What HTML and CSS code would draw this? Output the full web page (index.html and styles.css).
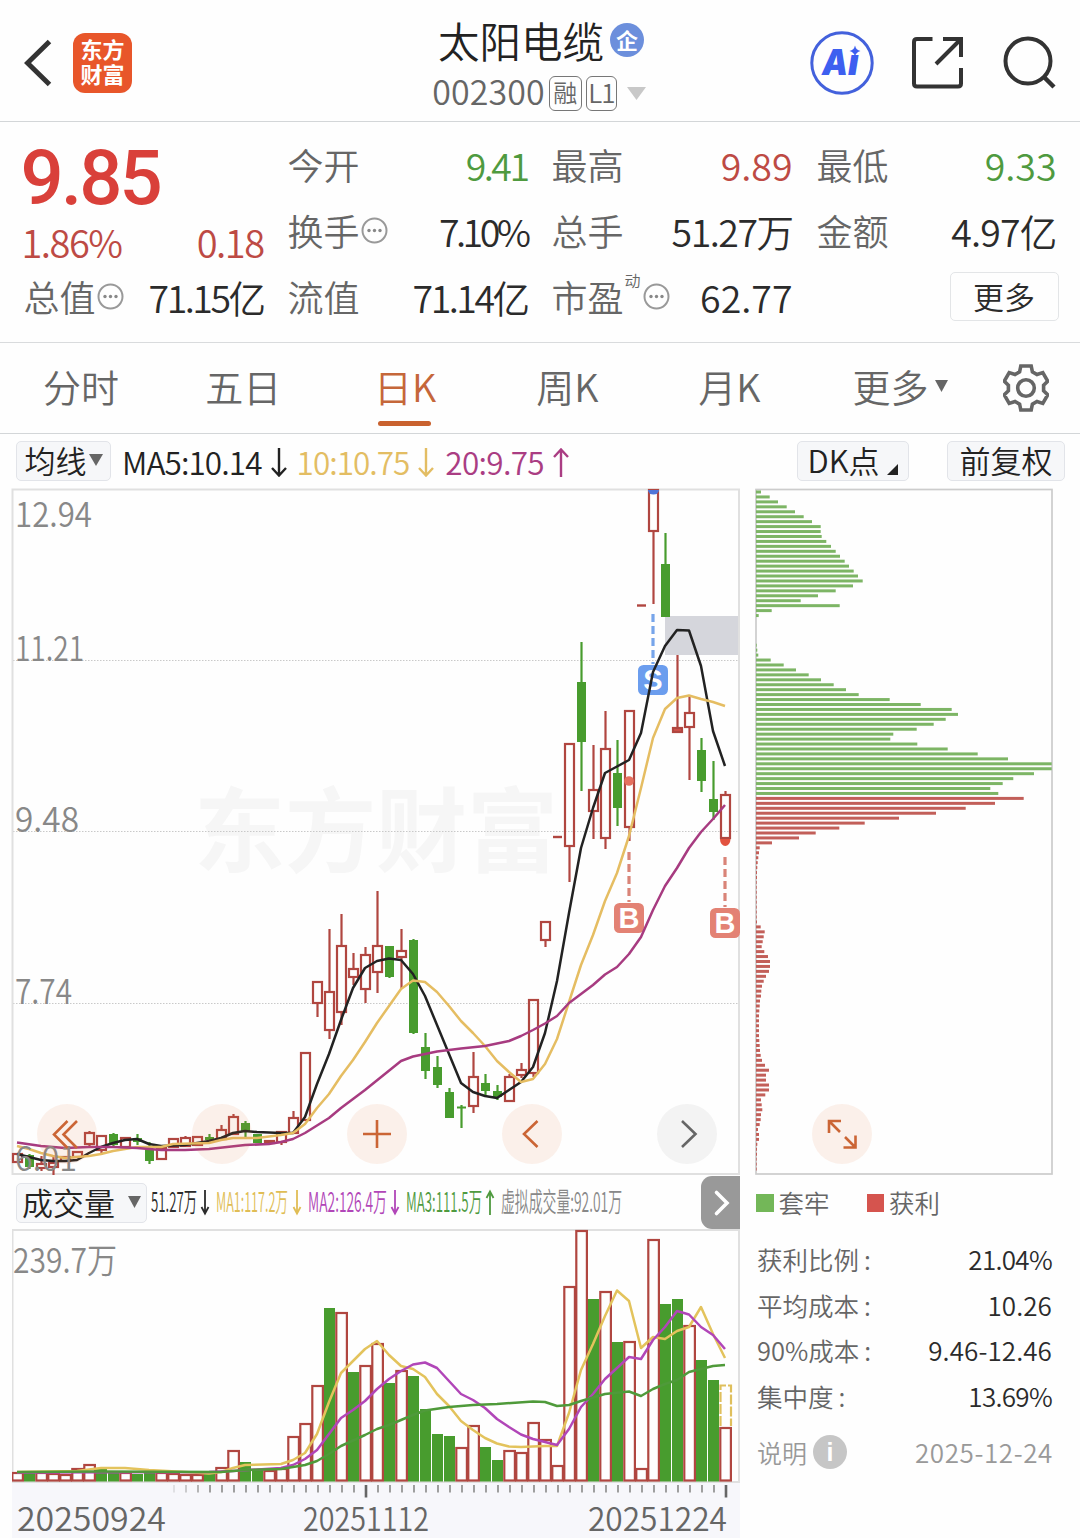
FILE: index.html
```html
<!DOCTYPE html>
<html lang="zh-CN">
<head>
<meta charset="utf-8">
<title>太阳电缆 002300</title>
<link rel="stylesheet" href="styles.css">
</head>
<body>
<header class="topbar">
  <div class="topbar-left">
    <svg class="back" width="28" height="50" viewBox="0 0 28 50"><path d="M25.500 3.500 3.500 25 25.500 46.500" fill="none" stroke="#333" stroke-width="5"/></svg>
    <div class="logo"><span>东方</span><span>财富</span></div>
  </div>
  <div class="title">
    <div class="title-name">太阳电缆<span class="badge-corp">企</span></div>
    <div class="title-code"><span class="code">002300</span><span class="tag">融</span><span class="tag tag-l1">L1</span><svg class="caret" width="19" height="13" viewBox="0 0 19 13"><path d="M0 0h19L9.500 13z" fill="#c8c8c8"/></svg></div>
  </div>
  <div class="topbar-right">
    <svg width="64" height="64" viewBox="0 0 64 64">
      <circle cx="32" cy="32" r="30.200" fill="none" stroke="#4361dc" stroke-width="3"/>
      <text x="12" y="44" class="ai-text" textLength="26" lengthAdjust="spacingAndGlyphs">A</text>
      <text x="38" y="44" class="ai-text">ı</text>
      <path d="M45 14.500q1 4.500 5.500 5.500-4.500 1-5.500 5.500-1-4.500-5.500-5.500 4.500-1 5.500-5.500z" fill="#3d5ff0"/>
    </svg>
    <svg width="52" height="52" viewBox="0 0 52 52"><path d="M20.500 2H5Q2 2 2 5V46.500Q2 49.500 5 49.500H46Q49 49.500 49 46.500V31M31 2H49V20M49 2 24 27" fill="none" stroke="#333" stroke-width="4"/></svg>
    <svg width="54" height="54" viewBox="0 0 54 54"><circle cx="25" cy="25" r="22.500" fill="none" stroke="#333" stroke-width="4"/><path d="M40 40 51 51" stroke="#333" stroke-width="4.500"/></svg>
  </div>
</header>

<section class="quote">
  <div class="price-cell">
    <div class="price">9.85</div>
    <div class="change"><span class="s15">1.86%</span><span class="s15">0.18</span></div>
  </div>
  <div class="cell"><label>今开</label><b class="down s25">9.41</b></div>
  <div class="cell"><label>最高</label><b class="up">9.89</b></div>
  <div class="cell"><label>最低</label><b class="down">9.33</b></div>
  <div class="cell"><label>换手<svg class="dots" width="27" height="27" viewBox="0 0 27 27"><use href="#more-dots"/></svg></label><b class="s35">7.10%</b></div>
  <div class="cell"><label>总手</label><b class="s15">51.27万</b></div>
  <div class="cell"><label>金额</label><b class="s1">4.97亿</b></div>
  <div class="cell"><label>总值<svg class="dots" width="27" height="27" viewBox="0 0 27 27"><use href="#more-dots"/></svg></label><b class="s25">71.15亿</b></div>
  <div class="cell"><label>流值</label><b class="s25">71.14亿</b></div>
  <div class="cell"><label>市盈<sup>动</sup><svg class="dots" width="27" height="27" viewBox="0 0 27 27"><use href="#more-dots"/></svg></label><b>62.77</b></div>
  <div class="cell cell-end"><button class="more">更多</button></div>
</section>

<nav class="tabs">
  <a>分时</a><a>五日</a><a class="active">日K</a><a>周K</a><a>月K</a>
  <a class="tab-more">更多<svg width="13" height="12" viewBox="0 0 13 12"><path d="M0 0h13L6.500 12z" fill="#666"/></svg></a>
  <svg class="gear" width="46" height="48" viewBox="-23 -24 46 48"><g fill="none" stroke="#666" stroke-width="3.600"><circle r="8.300"/><path d="M-5.200-22H5.200L6.400-16.200 11-13.500 16.800-15.400 21.700-6.800 17.600-2.700V2.700L21.700 6.800 16.800 15.400 11 13.500 6.400 16.200 5.200 22H-5.200L-6.400 16.200-11 13.500-16.800 15.400-21.700 6.800-17.600 2.700V-2.700L-21.700-6.800-16.800-15.400-11-13.500-6.400-16.200Z"/></g></svg>
</nav>

<div class="ma-bar">
  <button class="chip chip-ma">均线<svg width="14" height="12" viewBox="0 0 14 12"><path d="M0 0h14L7 12z" fill="#666"/></svg></button>
  <div class="ma ma5"><span>MA5:10.14</span><svg width="16" height="29" viewBox="0 0 16 29"><use href="#arrow-down"/></svg></div>
  <div class="ma ma10"><span>10:10.75</span><svg width="16" height="29" viewBox="0 0 16 29"><use href="#arrow-down"/></svg></div>
  <div class="ma ma20"><span>20:9.75</span><svg width="16" height="29" viewBox="0 0 16 29"><use href="#arrow-up"/></svg></div>
  <button class="chip chip-dk">DK点<svg width="11" height="11" viewBox="0 0 11 11"><path d="M11 0V11H0z" fill="#222"/></svg></button>
  <button class="chip chip-adj">前复权</button>
</div>

<main class="work">
  <section class="left">
    <div class="price-chart">
      <svg id="price" width="728" height="688" viewBox="12 488 728 688"></svg>
      <div class="controls">
        <button class="round"><svg width="60" height="60" viewBox="0 0 60 60"><path d="M30.500 17 17 30.500 30.500 44M40 17 26.500 30.500 40 44"/></svg></button>
        <button class="round"></button>
        <button class="round"><svg width="60" height="60" viewBox="0 0 60 60"><path d="M30 16V44M16 30H44"/></svg></button>
        <button class="round"><svg width="60" height="60" viewBox="0 0 60 60"><path d="M35.500 17 22 30 35.500 43"/></svg></button>
        <button class="round disabled"><svg width="60" height="60" viewBox="0 0 60 60"><path d="M25 17 38.500 30 25 43"/></svg></button>
      </div>
    </div>
    <div class="vol-bar">
      <button class="chip chip-vol">成交量<svg width="13" height="12" viewBox="0 0 13 12"><path d="M0 0h13L6.500 12z" fill="#666"/></svg></button>
      <svg class="vol-legend" width="475" height="53" viewBox="151 1176 475 53">
        <g id="vol-legend-items"></g>
      </svg>
      <button class="next"><svg width="39" height="53" viewBox="0 0 39 53"><path d="M15.500 16.500 26 27 15.500 37.500" fill="none" stroke="#fff" stroke-width="3.600" stroke-linecap="round"/></svg></button>
    </div>
    <svg id="volume" width="728" height="309" viewBox="12 1229 728 309"></svg>
  </section>
  <section class="right">
    <div class="chips-chart">
      <svg id="chips" width="298" height="688" viewBox="755 488 298 688"></svg>
      <button class="round expand"><svg width="60" height="60" viewBox="0 0 60 60"><path d="M28 28 17 17M17 29V17H29M33 33 43.500 43.500M43.500 31.500V43.500H31.500"/></svg></button>
    </div>
    <div class="legend"><span><i class="sq green"></i>套牢</span><span><i class="sq red"></i>获利</span></div>
    <dl class="stats">
      <div><dt>获利比例<i>:</i></dt><dd>21.04%</dd></div>
      <div><dt>平均成本<i>:</i></dt><dd class="wide">10.26</dd></div>
      <div><dt>90%成本<i>:</i></dt><dd class="wide">9.46-12.46</dd></div>
      <div><dt>集中度<i>:</i></dt><dd>13.69%</dd></div>
    </dl>
    <div class="note"><span>说明<i class="info">i</i></span><time>2025-12-24</time></div>
  </section>
</main>

<svg class="defs" width="0" height="0">
  <symbol id="more-dots" viewBox="0 0 27 27"><circle cx="13.500" cy="13.500" r="12" fill="none" stroke="#999" stroke-width="2"/><circle cx="8" cy="13.500" r="1.700" fill="#888"/><circle cx="13.500" cy="13.500" r="1.700" fill="#888"/><circle cx="19" cy="13.500" r="1.700" fill="#888"/></symbol>
  <symbol id="arrow-down" viewBox="0 0 16 29"><path d="M8 0V27M1 20 8 27.500 15 20" fill="none" stroke="currentColor" stroke-width="2.400"/></symbol>
  <symbol id="arrow-up" viewBox="0 0 16 29"><path d="M8 29V2M1 9 8 1.500 15 9" fill="none" stroke="currentColor" stroke-width="2.400"/></symbol>
</svg>
<script src="charts.js"></script>
</body>
</html>
```
FILE: styles.css
```css
* { box-sizing: border-box; }
body {
  margin: 0;
  width: 1080px;
  height: 1538px;
  overflow: hidden;
  background: #fefefe;
  color: #2b2b2b;
  font-family: "Noto Sans CJK SC", sans-serif;
  font-weight: 350;
}
button { font: inherit; color: inherit; padding: 0; border: 0; background: none; }
svg { display: block; flex: none; }
.defs { position: absolute; }

/* top bar */
.topbar {
  display: grid;
  grid-template-columns: 1fr 220px 1fr;
  height: 122px;
  border-bottom: 1px solid #d3d6d8;
}
.topbar-left { display: flex; align-items: center; gap: 21px; padding: 4px 0 0 24px; }
.logo {
  display: flex;
  flex-direction: column;
  align-items: center;
  justify-content: center;
  width: 59px;
  height: 60px;
  padding-bottom: 3px;
  border-radius: 12px;
  background: #e8562a;
  color: #fff;
  font-size: 22px;
  font-weight: 600;
  line-height: 25.500px;
}
.title { display: flex; flex-direction: column; align-items: center; }
.title-name { display: flex; align-items: center; gap: 6px; height: 60px; margin: 10px 0 1px 2px; font-size: 41.500px; white-space: nowrap; color: #222; }
.badge-corp {
  width: 34px;
  height: 34px;
  border-radius: 50%;
  background: #6c8fdc;
  color: #fff;
  font-size: 22px;
  font-weight: 700;
  line-height: 32px;
  text-align: center;
}
.title-code { display: flex; align-items: center; height: 44px; margin-right: 2px; color: #666; }
.code { font-size: 34px; letter-spacing: .1px; line-height: 40px; padding-bottom: 4px; }
.tag {
  width: 33px;
  height: 35px;
  margin-left: 4px;
  border: 1.500px solid #777;
  border-radius: 6px;
  font-size: 24px;
  line-height: 29px;
  text-align: center;
}
.tag-l1 { width: 31px; font-size: 26px; letter-spacing: -1px; }
.caret { margin-left: 10px; }
.topbar-right { display: flex; align-items: center; justify-content: flex-end; gap: 38.500px; padding: 4px 23.500px 0 0; }
.ai-text { font: italic 900 36px Inter, sans-serif; fill: #3d5ff0; }

/* quote */
.quote {
  display: grid;
  grid-template-columns: 240px 240px 241px 240px;
  grid-template-rows: repeat(3, 66px);
  column-gap: 24px;
  height: 221px;
  padding: 11px 23px 0 23.500px;
  border-bottom: 1px solid #d9dbdd;
}
.price-cell { grid-row: span 2; display: flex; flex-direction: column; color: #d9403a; }
.price { height: 83px; margin-left: -3px; font: 500 76px/91px Roboto, sans-serif; letter-spacing: -2.800px; }
.change { display: flex; justify-content: space-between; margin-left: -2px; font-size: 38px; line-height: 51px; color: #bd4a44; }
.cell { display: flex; justify-content: space-between; align-items: center; height: 62px; font-size: 36px; white-space: nowrap; }
.cell label { display: flex; align-items: center; color: #666; }
.cell b { font-size: 37.500px; font-weight: inherit; }
.cell .up { color: #bd4a44; }
.cell .down { color: #4f9a3f; }
.dots { margin: 0 0 0 1px; }
sup { align-self: flex-start; margin: -7px -14px 0 1px; font-size: 16px; line-height: 34px; }
sup + .dots { margin-left: 16px; }
.s1 { letter-spacing: -.8px; }
.s15 { letter-spacing: -1.500px; }
.s25 { letter-spacing: -2.500px; }
.s35 { letter-spacing: -3.500px; }
.cell-end { justify-content: flex-end; }
.more { width: 109px; height: 49px; margin-right: -2px; border: 1.500px solid #e3e5e7; border-radius: 5px; font-size: 31px; line-height: 42px; }

/* tabs */
.tabs { display: flex; height: 91px; border-bottom: 1px solid #d3d6d8; color: #666; font-size: 38px; }
.tabs a { position: relative; width: 162.100px; text-align: center; line-height: 86px; }
.tabs .active { color: #c5673a; }
.tabs .active::after { content: ""; position: absolute; left: 53.500px; bottom: 7px; width: 53px; height: 5px; border-radius: 2.500px; background: #c9622f; }
.tabs .tab-more { display: flex; align-items: center; gap: 7px; width: 150px; margin-left: 42px; line-height: 84px; padding-bottom: 4px; }
.gear { margin: 21px 0 0 1px; }

/* moving-average bar */
.ma-bar { display: flex; align-items: flex-start; height: 54px; padding: 7px 15px 0 16px; font-size: 31.500px; }
.chip {
  display: flex;
  align-items: center;
  justify-content: center;
  height: 40px;
  padding-bottom: 2px;
  border: 1.500px solid #e2e4e9;
  border-radius: 5px;
  background: #f6f7f9;
  color: #222;
  font-size: 31px;
  line-height: 36px;
}
.chip-ma { width: 95px; gap: 2px; }
.chip-dk { width: 112px; margin-left: auto; gap: 8px; }
.chip-dk svg { margin-top: 19px; }
.chip-adj { width: 118px; margin-left: 38px; }
.ma { display: flex; align-items: center; height: 40px; gap: 9px; line-height: 38px; }
.ma span { margin-top: -1px; }
.ma svg { margin-top: 2px; }
.ma5 { margin-left: 11px; color: #222; letter-spacing: -.9px; }
.ma10 { margin-left: 10px; color: #e3bd63; letter-spacing: -1px; }
.ma20 { margin-left: 11px; color: #aa3d83; letter-spacing: -.7px; }

/* charts */
.work { display: flex; }
.left { width: 740px; padding-left: 12px; }
.right { margin-left: 15px; width: 298px; }
.price-chart, .chips-chart { position: relative; }
#price { overflow: visible; }
.controls { position: absolute; left: 25px; top: 616px; display: flex; gap: 95px; }
.round { width: 60px; height: 60px; border-radius: 50%; background: rgba(222, 118, 60, .1); }
.round path { fill: none; stroke: #cb6535; stroke-width: 2.600; }
.round.disabled { background: rgba(60, 60, 60, .06); }
.round.disabled path { stroke: #666; }
.expand { position: absolute; left: 57px; top: 616px; }
.vol-bar { display: flex; align-items: center; height: 53px; }
.chip-vol { width: 131px; margin-left: 4px; gap: 13px; }
.vol-legend { margin-left: 4px; }
.next { margin-left: auto; width: 39px; height: 53px; border-radius: 11px 0 0 11px; background: #999; }
text { font-family: "Noto Sans CJK SC", sans-serif; }
.axis { fill: #888; font-size: 34.500px; }
.date { fill: #666; font-size: 32px; }
.vlabel { font-size: 27.500px; }
.watermark { fill: #f6f6f6; font-size: 92px; font-weight: 700; }
.signal { fill: #fff; font: 700 29px "Liberation Sans", sans-serif; }

/* chip distribution details */
.legend { display: flex; gap: 37px; padding: 6px 0 0 1px; font-size: 25.500px; line-height: 40px; color: #666; }
.legend span { display: flex; align-items: center; gap: 5px; }
.sq { width: 17.500px; height: 18px; margin-top: 1px; }
.sq.green { background: #73b758; }
.sq.red { background: #d5544e; }
.stats { margin: 14px 0 0; padding: 0 1px 0 2px; font-size: 26px; }
.stats div { display: flex; justify-content: space-between; height: 45.500px; line-height: 45px; }
.stats dt { color: #666; font-size: 25.500px; }
.stats i { margin-left: 5px; font-style: normal; }
.stats dd { margin: 0; letter-spacing: -.7px; }
.stats .wide { letter-spacing: .1px; }
.note { display: flex; justify-content: space-between; align-items: center; margin-top: 11px; padding: 0 1px 0 2px; font-size: 25px; line-height: 46px; color: #999; }
.note span { display: flex; align-items: center; gap: 6px; }
.note time { font-size: 26px; letter-spacing: .6px; margin-right: -1px; }
.info { width: 34px; height: 34px; border-radius: 50%; background: #c6c6c6; color: #fff; font: 700 25px/34px "Liberation Sans", sans-serif; text-align: center; }
```
FILE: charts.js
```js
const NS = 'http://www.w3.org/2000/svg';
const RED = '#b04640', GREEN = '#489c2e', YELLOW = '#e5bd62', PURPLE = '#a73b80';
const cx = i => 17.5 + 12 * i;

function add(parent, tag, attrs, text) {
  const el = document.createElementNS(NS, tag);
  for (const k in attrs) el.setAttribute(k, attrs[k]);
  if (text !== undefined) el.textContent = text;
  parent.appendChild(el);
  return el;
}
function rect(p, x, y, w, h, fill, extra) {
  return add(p, 'rect', Object.assign({ x, y, width: w, height: h, fill }, extra));
}
function line(p, x1, y1, x2, y2, stroke, w, extra) {
  return add(p, 'line', Object.assign({ x1, y1, x2, y2, stroke, 'stroke-width': w || 2 }, extra));
}
function curve(p, pts, stroke) {
  add(p, 'polyline', { points: pts, fill: 'none', stroke, 'stroke-width': 2.5, 'stroke-linejoin': 'round' });
}
function label(p, x, y, text, cls, len, extra) {
  add(p, 'text', Object.assign({ x, y, class: cls, textLength: len, lengthAdjust: 'spacingAndGlyphs' }, extra), text);
}

/* ---- price chart: [colour, body top, body bottom, high, low] ---- */
const candles = [
  ['r',1154,1162],['g',1155,1167,1154,1169],['r',1164,1168,1156,1171],['r',1163,1167,1157,1175],
  ['r',1157,1161],['r',1152,1157],['r',1133,1144,1131,1147],['r',1136,1150,1136,1155],
  ['g',1134,1145,1133,1146],['r',1138,1147],['g',1138,1142,1134,1145],['g',1149,1161,1142,1164],
  ['r',1148,1159],['r',1139,1147],['r',1138,1146,1136,1146],['r',1137,1145],
  ['g',1137,1140,1134,1141],['r',1130,1139,1125,1140],['r',1117,1134,1114,1134],['g',1123,1131,1121,1137],
  ['g',1134,1143],['r',1141,1143],['r',1132,1142,1132,1145],['r',1118,1133,1111,1133],
  ['r',1053,1120],['r',982,1003,982,1017],['r',992,1030,929,1039],['r',946,1012,914,1025],
  ['r',969,977,953,985],['r',955,989,947,1003],['r',946,972,891,993],['g',946,977,946,978],
  ['r',951,957,929,989],['g',940,1033,939,1034],['g',1047,1071,1033,1079],['g',1067,1085,1056,1088],
  ['g',1092,1118,1088,1118],['g',1106.5,1108.5,1105,1128],['r',1077,1106,1052,1113],['g',1083,1091,1074,1095],
  ['g',1091,1097,1085,1100],['r',1077,1101,1074,1101],['r',1070,1075,1063,1078],['r',1000,1073,1000,1077],
  ['r',922,940,922,947],['d',837],['r',744,846,744,882],['g',682,742,642,791],
  ['r',790,811,745,839],['r',749,838,711,849],['g',773,808,740,826],['r',711,827,711,841],
  ['d',605.5],['r',490,531,489,604],['g',564,617,533,617],['f',728,732,655,732],
  ['r',713,727,695,780],['g',750,781,738,792],['g',799,812,761,820],['r',795,838,791,838]
];
const price = document.getElementById('price');
label(price, 194, 865, '东方财富', 'watermark', 364);
[660.5, 831.5, 1003.5].forEach(y => line(price, 13, y, 738, y, '#c9c9c9', 1.2, { 'stroke-dasharray': '1.5 1.5' }));
rect(price, 665, 616, 74, 39, '#d5d6dc');
rect(price, 12.5, 489.5, 726.5, 684.5, 'none', { stroke: '#e0e0e0', 'stroke-width': 2 });
candles.forEach((c, i) => {
  const x = cx(i), [kind, t, b, h, l] = c;
  if (kind === 'd') { line(price, x - 4.5, t, x + 4.5, t, RED, 2.4); return; }
  if (kind === 'g') {
    if (h) line(price, x, h, x, l, GREEN, 2.2);
    rect(price, x - 4.5, t, 9, b - t, GREEN);
    return;
  }
  if (h) { line(price, x, h, x, t, RED, 2.2); line(price, x, b, x, l, RED, 2.2); }
  rect(price, x - 4.5, t, 9, b - t, kind === 'f' ? '#d0504a' : 'none', { stroke: RED, 'stroke-width': 2.2 });
});
add(price, 'path', { d: 'M648 490h11a5.500 4.500 0 0 1-11 0z', fill: '#4f74d8' });
add(price, 'circle', { cx: 629, cy: 781, r: 4.8, fill: '#e5705f' });
add(price, 'path', { d: 'M720 839h10.500a5.200 7 0 0 1-10.500 0z', fill: '#e2523f' });
line(price, 653, 614, 653, 664, '#77a5ea', 3.2, { 'stroke-dasharray': '8 4' });
line(price, 629, 852, 629, 902, '#d98478', 3.2, { 'stroke-dasharray': '8 4' });
line(price, 725, 857, 725, 907, '#d98478', 3.2, { 'stroke-dasharray': '8 4' });
[[614, 903, 'B', '#e38274'], [710, 908, 'B', '#e38274'], [638, 665, 'S', '#6b9dee']].forEach(([x, y, t, f]) => {
  rect(price, x, y, 30, 30, f, { rx: 5.5 });
  add(price, 'text', { x: x + 15, y: y + 25.3, class: 'signal', 'text-anchor': 'middle' }, t);
});
curve(price, '17,1154 29,1157 41,1160 53,1161 65,1161 77,1160 89,1153 101,1147 113,1143 125,1140 137,1139 149,1144 161,1146 185,1145 209,1141 221,1138 233,1133 245,1131 257,1132 281,1133 293,1133 305,1117 317,1084 329,1054 341,1020 353,988 365,968 377,961 389,958.5 401,960 413,974 425,996 437,1025 449,1054 461,1083 473,1092 485,1096 497,1098 509,1090 521,1082 533,1067 545,1033 557,981 569,913 581,848 593,808 605,773 617,766.5 629,760 641,733 653,672 665,646 677,630 689,630.5 701,666 713,731 725,766', '#222');
curve(price, '17,1146 29,1149 41,1153 53,1156 65,1158 77,1157 89,1156 101,1154 113,1151 125,1149 137,1147 161,1147 173,1144 209,1143 221,1140 233,1138 257,1138 281,1135 293,1133 305,1124 317,1108 329,1094 341,1076 353,1060 365,1042 377,1023 389,1006 401,989 413,980.5 425,982 437,992 449,1006 461,1021 473,1033 485,1046 497,1061 509,1072 521,1082 533,1079 545,1064 557,1039 569,1002 581,965 593,935 605,901 617,873 629,836 641,788 653,738 665,709 677,698 689,695.5 701,699 713,702 725,706', YELLOW);
curve(price, '17,1142.5 41,1146 65,1148 89,1147 113,1147 137,1148 161,1150 185,1150 209,1149 245,1145 269,1144 281,1142 293,1139 305,1133 329,1118 341,1108 365,1090 401,1061 413,1056.5 437,1051.5 461,1048.5 485,1046 509,1041 521,1036 533,1030 545,1023.5 557,1016 569,1003 593,985 605,974.5 617,967 629,954 641,937 653,910 665,886 677,868 689,848 701,832 713,819 725,805', PURPLE);
[['12.94', 527, 77], ['11.21', 661, 69], ['9.48', 832, 64], ['7.74', 1004, 57], ['6.01', 1171, 62]]
  .forEach(([t, y, w]) => label(price, 15, y, t, 'axis', w));

/* ---- volume legend: glyphs are squeezed to half width ---- */
const legend = document.getElementById('vol-legend-items');
const items = [
  [151, 46, '51.27万', '#2b2b2b', 205, 1], [216, 72, 'MA1:117.2万', '#e0bd55', 297, 1],
  [308, 79, 'MA2:126.4万', '#b146b8', 395, 1], [406, 76, 'MA3:111.5万', '#4f9a3f', 490, -1],
  [501, 121, '虚拟成交量:92.01万', '#888']
];
items.forEach(([x, w, t, color, ax, dir]) => {
  label(legend, x * 2, 1212, t, 'vlabel', w * 2, { fill: color, transform: 'scale(.5 1)' });
  if (!ax) return;
  const d = dir > 0
    ? `M${ax} 1190V1213M${ax - 3.5} 1207L${ax} 1213.5L${ax + 3.5} 1207`
    : `M${ax} 1215V1192M${ax - 3.5} 1198L${ax} 1191.5L${ax + 3.5} 1198`;
  add(legend, 'path', { d, fill: 'none', stroke: color, 'stroke-width': 1.8 });
});

/* ---- volume chart: bar tops ---- */
const bars = 'r1473 g1472 r1473 r1474 r1475 r1469 r1465 g1468 g1471 r1473 g1474 g1472 r1473 r1474 r1475 r1475 g1473 r1468 r1451 g1462 g1470 r1471 r1469 r1437 r1424 r1386 g1308 r1313 g1372 r1366 r1344 g1383 r1371 g1376 g1409 g1434 g1436 r1448 r1426 g1447 g1460 r1451 r1453 r1423 r1440 r1466 r1287 r1231 g1299 r1292 g1342 r1342 r1469 r1240 g1304 g1299 r1326 g1360 g1380 r1428'.split(' ');
const vol = document.getElementById('volume');
rect(vol, 12, 1482, 728, 56, '#f7f7fb');
rect(vol, 12.5, 1230, 726.5, 252, 'none', { stroke: '#e0e0e0', 'stroke-width': 2 });
label(vol, 13, 1273, '239.7万', 'axis', 104);
bars.forEach((b, i) => {
  const x = cx(i), y = +b.slice(1);
  if (b[0] === 'g') rect(vol, x - 5.5, y, 11, 1481.5 - y, GREEN);
  else rect(vol, x - 5.2, y, 10.6, 1480.5 - y, 'none', { stroke: RED, 'stroke-width': 2.2 });
});
add(vol, 'path', { d: 'M720.500 1426V1385.500H731V1426', fill: 'none', stroke: '#dfbf5c', 'stroke-width': 2.2, 'stroke-dasharray': '10 2' });
curve(vol, '17,1472 77,1471 101,1468 125,1468 149,1470 185,1472 209,1473.5 221,1472 233,1468 245,1465 281,1464 293,1460 305,1453 317,1434 329,1402 341,1373 353,1361 365,1349 377,1341 389,1355 401,1366 413,1369 425,1377 437,1394 449,1406 461,1421 473,1430 485,1438 497,1443.5 509,1446.5 521,1447 545,1446 557,1446 569,1413 581,1370 593,1344 605,1316 617,1290.5 629,1301 641,1348 653,1337 665,1339 677,1331 689,1327 701,1307 713,1334 725,1358', '#e3c35c');
curve(vol, '17,1472.5 209,1472 233,1471 281,1468 293,1465 305,1459 317,1450 329,1434 341,1418 353,1410 365,1401 377,1389 389,1379 401,1371 413,1364.5 425,1362.5 437,1368 449,1381 461,1394 473,1400 485,1408 497,1419 509,1427 521,1434.5 533,1439 545,1442 557,1445 569,1429 581,1407 593,1394 605,1379 617,1368 629,1357 641,1359 653,1340 665,1327 677,1311 689,1314.5 701,1327 713,1335 725,1349', '#b146b8');
curve(vol, '17,1472 101,1471.5 221,1472 245,1470 281,1469 305,1465 317,1461 329,1454 341,1446 365,1435 377,1429 389,1425 401,1420 413,1415 425,1410.5 449,1407 473,1405 497,1404 533,1401.5 545,1402 557,1406 569,1405 581,1401 605,1394 629,1391.5 641,1396 653,1389 665,1384 677,1380 689,1372 701,1369 713,1366 725,1365', '#4f9a3a');
for (let x = 174; x <= 726; x += 12) {
  const major = x === 366 || x === 726;
  line(vol, x, 1485, x, major ? 1497.5 : 1492.5, major ? '#666' : '#888', major ? 2.6 : 1.6, { opacity: Math.min(1, (x - 162) / 48) });
}
[[17, '20250924', 149], [303, '20251112', 126], [588, '20251224', 139]]
  .forEach(([x, t, w]) => label(vol, x, 1531, t, 'date', w));

/* ---- chip distribution: bar lengths by price level, top to bottom ---- */
const levels = [
  15,41,66,92,117,143,168,194,194,197,211,225,239,252,266,279,293,306,320,291,239,186,134,251,47,8,
  0,0,0,0,0,2,4,7,44,83,120,158,195,233,270,308,401,494,587,606,569,533,482,412,403,484,575,665,756,887,887,834,772,740,703,727,
  803,717,629,540,429,326,250,179,129,48,11,9,7,5,4,3,3,2,2,2,2,2,2,2,2,3,
  14,26,23,20,17,25,36,42,42,39,30,23,18,16,15,12,11,10,9,9,9,9,9,10,11,12,14,18,27,39,30,30,39,39,28,15,17,19,15,14,11,6,9,9,4,3,3,2,2,2
];
const chips = document.getElementById('chips');
rect(chips, 756, 489.5, 296, 684.5, 'none', { stroke: '#ccc', 'stroke-width': 1.7 });
levels.forEach((n, i) => {
  if (n) rect(chips, 756, (490.5 + i * 4.942).toFixed(2), (n / 3).toFixed(1), 3, i < 62 ? '#7db565' : '#c25f59');
});
```
